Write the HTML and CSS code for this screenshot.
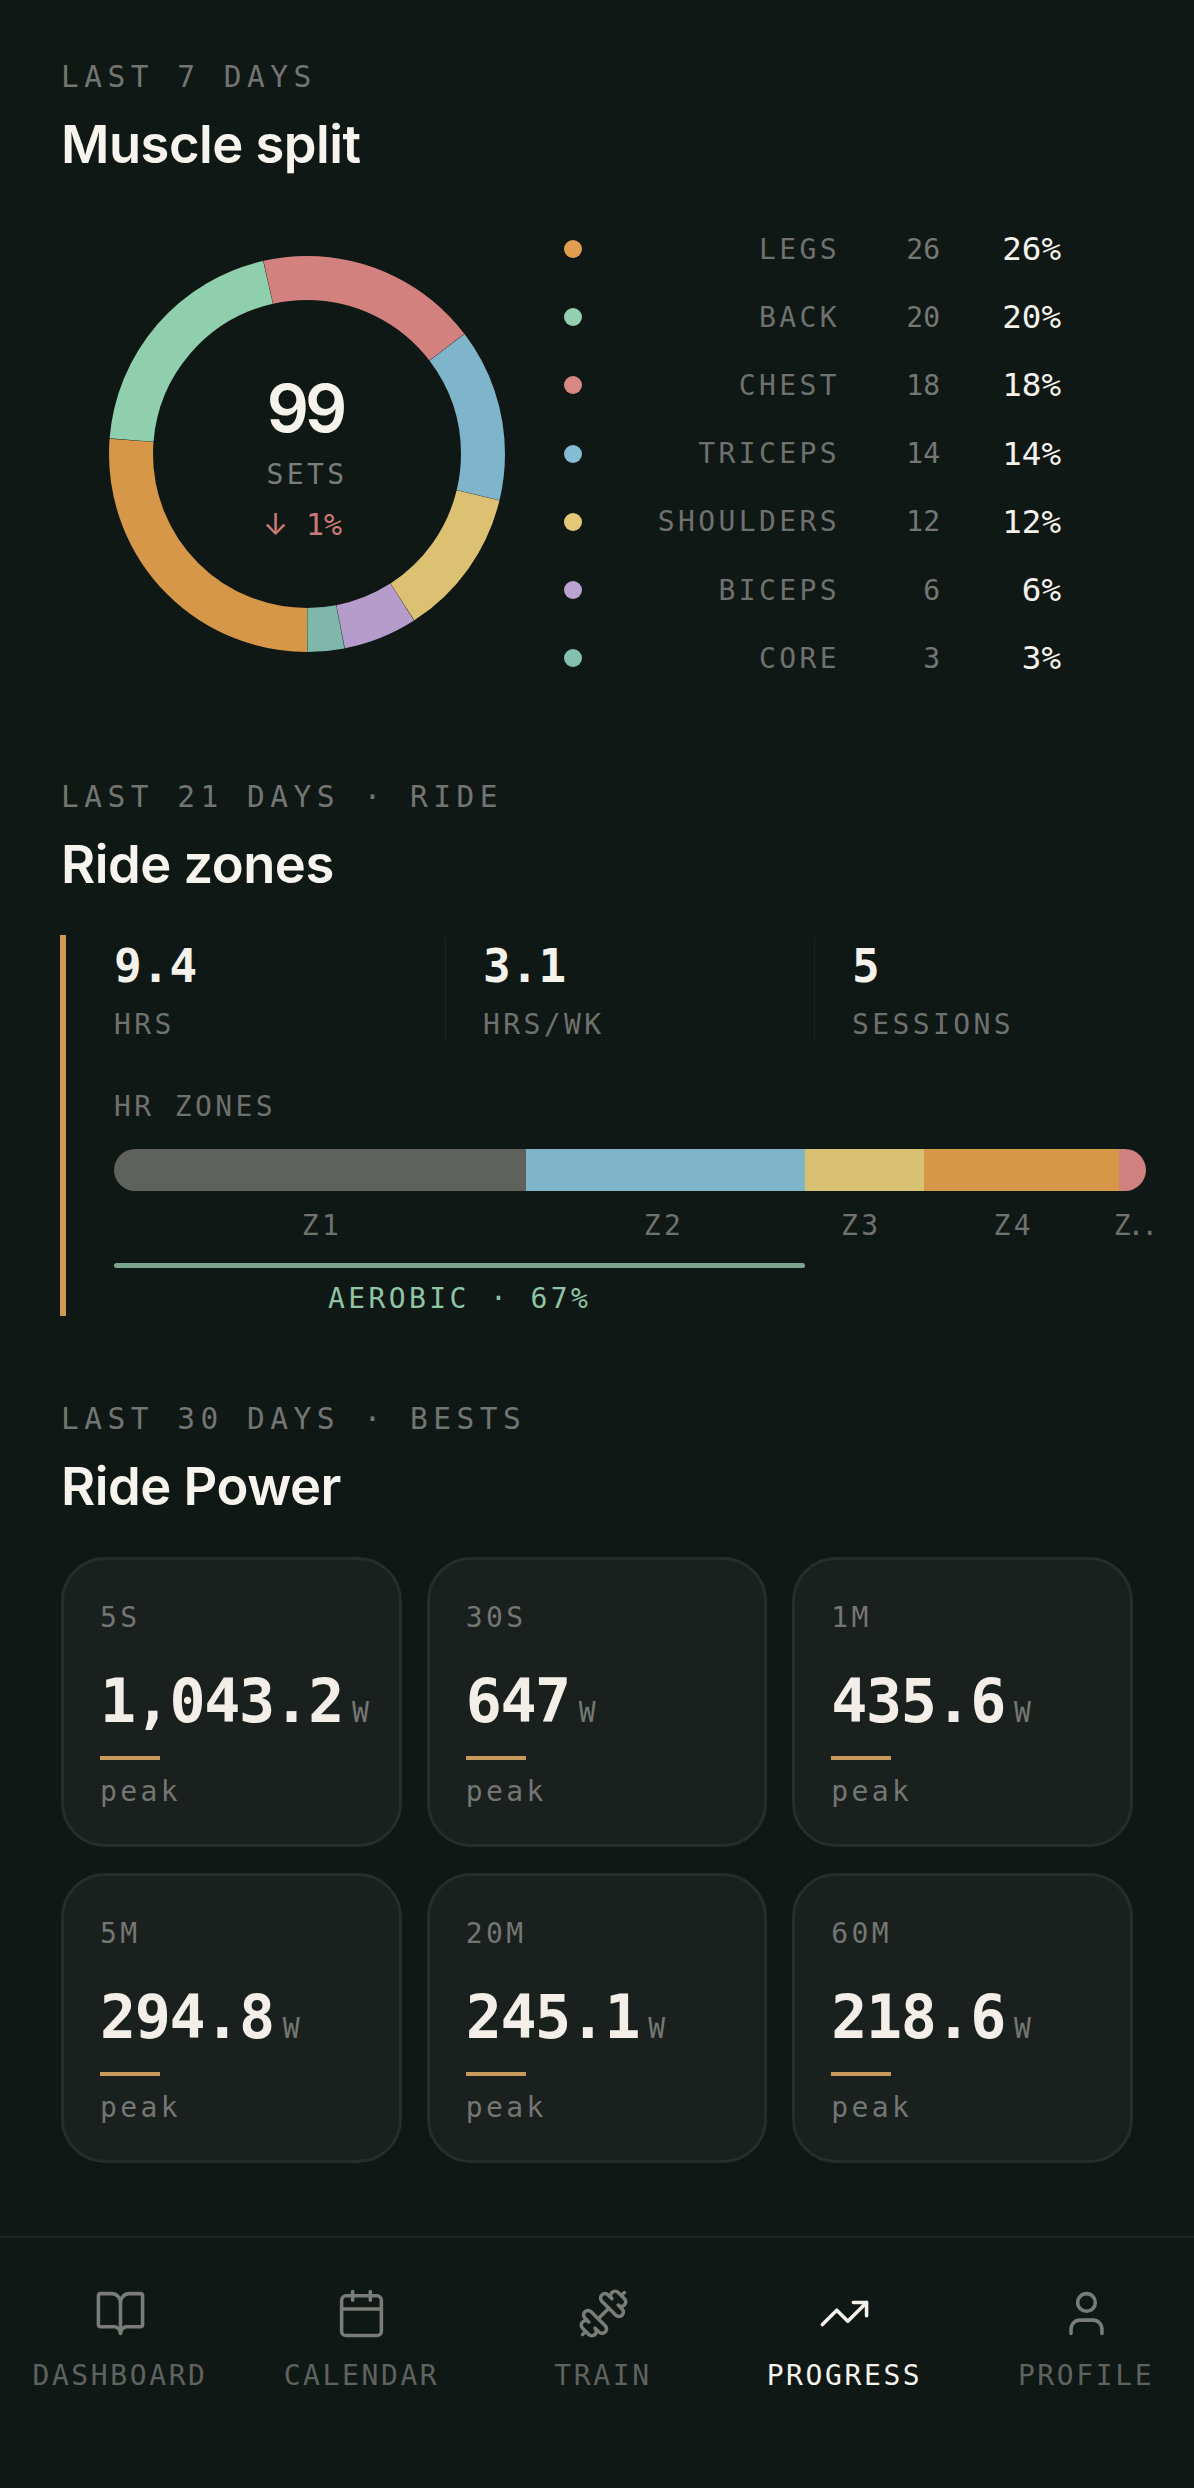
FILE: index.html
```html
<!DOCTYPE html>
<html lang="en">
<head>
    <meta charset="UTF-8">
    <meta name="viewport" content="width=device-width, initial-scale=1.0">
    <title>Progress</title>
    <link rel="stylesheet" href="styles.css">
</head>
<body>
    <main class="page">
        <section class="block block-split">
            <div class="eyebrow">LAST 7 DAYS</div>
            <h2 class="title">Muscle split</h2>
            <div class="split">
                <div class="donut">
                    <svg class="donut-ring" viewBox="0 0 396 396" width="396" height="396">
                        <!-- rotated so 0 sits at the bottom, sets add up to 99 -->
                        <g transform="rotate(90 198 198)" fill="none" stroke-width="44">
                            <circle cx="198" cy="198" r="176" pathLength="99" stroke="#d69748" stroke-dasharray="25.97 73.03" stroke-dashoffset="0"/>
                            <circle cx="198" cy="198" r="176" pathLength="99" stroke="#90cfae" stroke-dasharray="19.97 79.03" stroke-dashoffset="-26"/>
                            <circle cx="198" cy="198" r="176" pathLength="99" stroke="#d2817f" stroke-dasharray="17.97 81.03" stroke-dashoffset="-46"/>
                            <circle cx="198" cy="198" r="176" pathLength="99" stroke="#7fb5cb" stroke-dasharray="13.97 85.03" stroke-dashoffset="-64"/>
                            <circle cx="198" cy="198" r="176" pathLength="99" stroke="#dcc173" stroke-dasharray="11.97 87.03" stroke-dashoffset="-78"/>
                            <circle cx="198" cy="198" r="176" pathLength="99" stroke="#b59ccb" stroke-dasharray="5.97 93.03" stroke-dashoffset="-90"/>
                            <circle cx="198" cy="198" r="176" pathLength="99" stroke="#7fb8ab" stroke-dasharray="2.97 96.03" stroke-dashoffset="-96"/>
                        </g>
                    </svg>
                    <div class="donut-center">
                        <div class="donut-num">99</div>
                        <div class="donut-label">SETS</div>
                        <div class="donut-delta"><span class="delta-arrow">↓</span> 1%</div>
                    </div>
                </div>
                <div class="legend">
                    <span class="dot dot-legs"></span><span class="legend-name">LEGS</span><span class="legend-count">26</span><span class="legend-pct">26%</span>
                    <span class="dot dot-back"></span><span class="legend-name">BACK</span><span class="legend-count">20</span><span class="legend-pct">20%</span>
                    <span class="dot dot-chest"></span><span class="legend-name">CHEST</span><span class="legend-count">18</span><span class="legend-pct">18%</span>
                    <span class="dot dot-triceps"></span><span class="legend-name">TRICEPS</span><span class="legend-count">14</span><span class="legend-pct">14%</span>
                    <span class="dot dot-shoulders"></span><span class="legend-name">SHOULDERS</span><span class="legend-count">12</span><span class="legend-pct">12%</span>
                    <span class="dot dot-biceps"></span><span class="legend-name">BICEPS</span><span class="legend-count">6</span><span class="legend-pct">6%</span>
                    <span class="dot dot-core"></span><span class="legend-name">CORE</span><span class="legend-count">3</span><span class="legend-pct">3%</span>
                </div>
            </div>
        </section>

        <section class="block">
            <div class="eyebrow">LAST 21 DAYS · RIDE</div>
            <h2 class="title">Ride zones</h2>
            <div class="rail">
                <div class="stats">
                    <div class="stat">
                        <div class="stat-num">9.4</div>
                        <div class="stat-label">HRS</div>
                    </div>
                    <div class="stat">
                        <div class="stat-num">3.1</div>
                        <div class="stat-label">HRS/WK</div>
                    </div>
                    <div class="stat">
                        <div class="stat-num">5</div>
                        <div class="stat-label">SESSIONS</div>
                    </div>
                </div>
                <div class="zones-label">HR ZONES</div>
                <div class="zone-bar">
                    <div class="zone z1" style="width: 39.9%"></div>
                    <div class="zone z2" style="width: 27.1%"></div>
                    <div class="zone z3" style="width: 11.5%"></div>
                    <div class="zone z4" style="width: 18.9%"></div>
                    <div class="zone z5" style="width: 2.6%"></div>
                </div>
                <div class="zone-names">
                    <span class="zone-name" style="width: 40.3%">Z1</span>
                    <span class="zone-name" style="width: 26%">Z2</span>
                    <span class="zone-name" style="width: 12.2%">Z3</span>
                    <span class="zone-name" style="width: 17.4%">Z4</span>
                    <span class="zone-name zone-name-last">Z..</span>
                </div>
                <div class="aerobic" style="width: 67%">
                    <div class="aerobic-line"></div>
                    <div class="aerobic-text">AEROBIC · 67%</div>
                </div>
            </div>
        </section>

        <section class="block block-last">
            <div class="eyebrow">LAST 30 DAYS · BESTS</div>
            <h2 class="title">Ride Power</h2>
            <div class="power-grid">
                <div class="power-card">
                    <div class="power-label">5S</div>
                    <div class="power-value">1,043.2<span class="power-unit">W</span></div>
                    <div class="power-line"></div>
                    <div class="power-note">peak</div>
                </div>
                <div class="power-card">
                    <div class="power-label">30S</div>
                    <div class="power-value">647<span class="power-unit">W</span></div>
                    <div class="power-line"></div>
                    <div class="power-note">peak</div>
                </div>
                <div class="power-card">
                    <div class="power-label">1M</div>
                    <div class="power-value">435.6<span class="power-unit">W</span></div>
                    <div class="power-line"></div>
                    <div class="power-note">peak</div>
                </div>
                <div class="power-card">
                    <div class="power-label">5M</div>
                    <div class="power-value">294.8<span class="power-unit">W</span></div>
                    <div class="power-line"></div>
                    <div class="power-note">peak</div>
                </div>
                <div class="power-card">
                    <div class="power-label">20M</div>
                    <div class="power-value">245.1<span class="power-unit">W</span></div>
                    <div class="power-line"></div>
                    <div class="power-note">peak</div>
                </div>
                <div class="power-card">
                    <div class="power-label">60M</div>
                    <div class="power-value">218.6<span class="power-unit">W</span></div>
                    <div class="power-line"></div>
                    <div class="power-note">peak</div>
                </div>
            </div>
        </section>
    </main>

    <nav class="tabbar">
        <div class="tab">
            <svg class="tab-icon" viewBox="0 0 24 24"><path d="M12 7v14"/><path d="M3 18a1 1 0 0 1-1-1V4a1 1 0 0 1 1-1h5a4 4 0 0 1 4 4 4 4 0 0 1 4-4h5a1 1 0 0 1 1 1v13a1 1 0 0 1-1 1h-6a3 3 0 0 0-3 3 3 3 0 0 0-3-3z"/></svg>
            <div class="tab-label">DASHBOARD</div>
        </div>
        <div class="tab">
            <svg class="tab-icon" viewBox="0 0 24 24"><path d="M8 2v4"/><path d="M16 2v4"/><rect x="3" y="4" width="18" height="18" rx="2"/><path d="M3 10h18"/></svg>
            <div class="tab-label">CALENDAR</div>
        </div>
        <div class="tab">
            <svg class="tab-icon" viewBox="0 0 24 24"><path d="M17.596 12.768a2 2 0 1 0 2.829-2.829l-1.768-1.767a2 2 0 0 0 2.828-2.829l-2.828-2.828a2 2 0 0 0-2.829 2.828l-1.767-1.768a2 2 0 1 0-2.829 2.829z"/><path d="m2.5 21.5 1.4-1.4"/><path d="m20.1 3.9 1.4-1.4"/><path d="M5.343 21.485a2 2 0 1 0 2.829-2.828l1.767 1.768a2 2 0 1 0 2.829-2.829l-6.364-6.364a2 2 0 1 0-2.829 2.829l1.768 1.767a2 2 0 0 0-2.828 2.829z"/><path d="m9.6 14.4 4.8-4.8"/></svg>
            <div class="tab-label">TRAIN</div>
        </div>
        <div class="tab tab-active">
            <svg class="tab-icon" viewBox="0 0 24 24"><path d="M16 7h6v6"/><path d="m22 7-8.5 8.5-5-5L2 17"/></svg>
            <div class="tab-label">PROGRESS</div>
        </div>
        <div class="tab">
            <svg class="tab-icon" viewBox="0 0 24 24"><path d="M19 21v-2a4 4 0 0 0-4-4H9a4 4 0 0 0-4 4v2"/><circle cx="12" cy="7" r="4"/></svg>
            <div class="tab-label">PROFILE</div>
        </div>
    </nav>
</body>
</html>
```

FILE: styles.css
```css
* {
    box-sizing: border-box;
}
body {
    margin: 0;
    background-color: #101815;
    color: #f5f2ec;
    font-family: 'DejaVu Sans Mono', monospace;
    overflow-x: hidden;
}
.page {
    padding: 60px 61px 0;
}
.block {
    margin-bottom: 86px;
}
.block-split {
    margin-bottom: 88px;
}
.block-last {
    margin-bottom: 73px;
}
.eyebrow {
    font-size: 29.5px;
    line-height: 34px;
    letter-spacing: 5.5px;
    color: #737572;
    white-space: nowrap;
}
.title {
    margin: 19px 0 40px;
    font-family: 'Inter', sans-serif;
    font-size: 52.5px;
    line-height: 62px;
    font-weight: 600;
    letter-spacing: -0.5px;
    color: #f7f4ee;
}

/* muscle split */
.split {
    display: flex;
    align-items: center;
    gap: 59px;
    padding-left: 48px;
}
.donut {
    position: relative;
    flex: none;
    width: 396px;
    height: 396px;
}
.donut-ring {
    display: block;
}
.donut-center {
    position: absolute;
    inset: 0;
    display: flex;
    flex-direction: column;
    align-items: center;
    padding-top: 112px;
}
.donut-num {
    margin-left: -4px;
    font-family: 'Inter', sans-serif;
    font-size: 66px;
    line-height: 80px;
    font-weight: 600;
    letter-spacing: -4px;
}
.donut-label {
    margin-top: 10px;
    font-size: 28px;
    line-height: 34px;
    letter-spacing: 3.4px;
    color: #7c7e7a;
}
.donut-delta {
    margin: 14px 9px 0 0;
    font-size: 30px;
    line-height: 36px;
    color: #c97b78;
}
.delta-arrow {
    font-family: 'Inter', sans-serif;
}
.legend {
    flex: none;
    width: 497px;
    display: grid;
    grid-template-columns: 18px 1fr 100px 121px;
    grid-auto-rows: 68.2px;
    align-items: center;
}
.dot {
    width: 18px;
    height: 18px;
    border-radius: 50%;
}
.dot-legs { background: #e29d4f; }
.dot-back { background: #93d0af; }
.dot-chest { background: #d98784; }
.dot-triceps { background: #83bcd4; }
.dot-shoulders { background: #e3c877; }
.dot-biceps { background: #bba2d2; }
.dot-core { background: #84bfb1; }
.legend-name {
    text-align: right;
    font-size: 28px;
    letter-spacing: 3.4px;
    color: #6f716e;
}
.legend-count {
    text-align: right;
    font-size: 28px;
    color: #757774;
}
.legend-pct {
    text-align: right;
    font-size: 32.5px;
    color: #f5f2ec;
}

/* ride zones */
.rail {
    margin: 0 -13px 0 -1px;
    height: 381px;
    padding: 3px 0 0 48px;
    border-left: 6px solid #d09a55;
}
.stats {
    display: flex;
}
.stat {
    flex: 1 1 0;
    box-sizing: content-box;
    height: 103px;
    padding: 0 37px;
    border-right: 1px solid #1c2320;
}
.stat:first-child {
    padding-left: 0;
}
.stat:last-child {
    padding-right: 0;
    border-right: none;
}
.stat-num {
    font-size: 46px;
    line-height: 56px;
    font-weight: 700;
    color: #f5f2ec;
}
.stat-label,
.zones-label,
.zone-name,
.aerobic-text {
    font-size: 28px;
    line-height: 34px;
    letter-spacing: 3.4px;
    color: #6f716e;
}
.stat-label {
    margin-top: 14px;
}
.zones-label {
    margin-top: 49px;
}
.zone-bar {
    display: flex;
    height: 42px;
    margin-top: 25px;
    border-radius: 21px;
    overflow: hidden;
}
.z1 { background: #5f615d; }
.z2 { background: #7fb5c8; }
.z3 { background: #d9c174; }
.z4 { background: #d69748; }
.z5 { background: #d0807f; }
.zone-names {
    display: flex;
    margin-top: 18px;
}
.zone-name {
    flex: none;
    text-align: center;
    white-space: nowrap;
}
.zone-name-last {
    flex: 1;
    padding-left: 10px;
    text-align: left;
    letter-spacing: -3px;
}
.aerobic {
    margin-top: 20px;
}
.aerobic-line {
    height: 5px;
    border-radius: 3px;
    background: #7aa58c;
}
.aerobic-text {
    margin-top: 14px;
    text-align: center;
    color: #8fc4a5;
}

/* ride power */
.power-grid {
    display: grid;
    grid-template-columns: repeat(3, 1fr);
    gap: 26px 25px;
}
.power-card {
    height: 290px;
    padding: 41px 0 0 36px;
    background: #1a201d;
    border: 3px solid #272d2a;
    border-radius: 44px;
}
.power-label {
    font-size: 28px;
    line-height: 34px;
    letter-spacing: 3.4px;
    color: #747673;
}
.power-value {
    margin-top: 31px;
    font-size: 60px;
    line-height: 70px;
    font-weight: 700;
    letter-spacing: -1.4px;
    white-space: nowrap;
    color: #f3efe8;
}
.power-unit {
    margin-left: 9px;
    font-size: 28px;
    font-weight: 400;
    letter-spacing: 0;
    color: #757774;
}
.power-line {
    width: 60px;
    height: 4px;
    margin-top: 8px;
    background: #c99a5e;
}
.power-note {
    margin-top: 15px;
    font-size: 28px;
    line-height: 34px;
    letter-spacing: 3.4px;
    color: #747673;
}

/* bottom tabs */
.tabbar {
    display: grid;
    grid-template-columns: repeat(5, 216px);
    column-gap: 25.5px;
    height: 251px;
    padding: 49px 12px 0;
    border-top: 2px solid #1c2320;
}
.tab {
    display: flex;
    flex-direction: column;
    align-items: center;
    color: #7a7c79;
}
.tab-icon {
    width: 53px;
    height: 53px;
    fill: none;
    stroke: currentColor;
    stroke-width: 1.6;
    stroke-linecap: round;
    stroke-linejoin: round;
}
.tab-label {
    margin-top: 19px;
    font-size: 28px;
    line-height: 34px;
    letter-spacing: 2.6px;
    color: #5f625f;
}
.tab-active {
    color: #f5f2ec;
}
.tab-active .tab-label {
    color: #f5f2ec;
}
```
